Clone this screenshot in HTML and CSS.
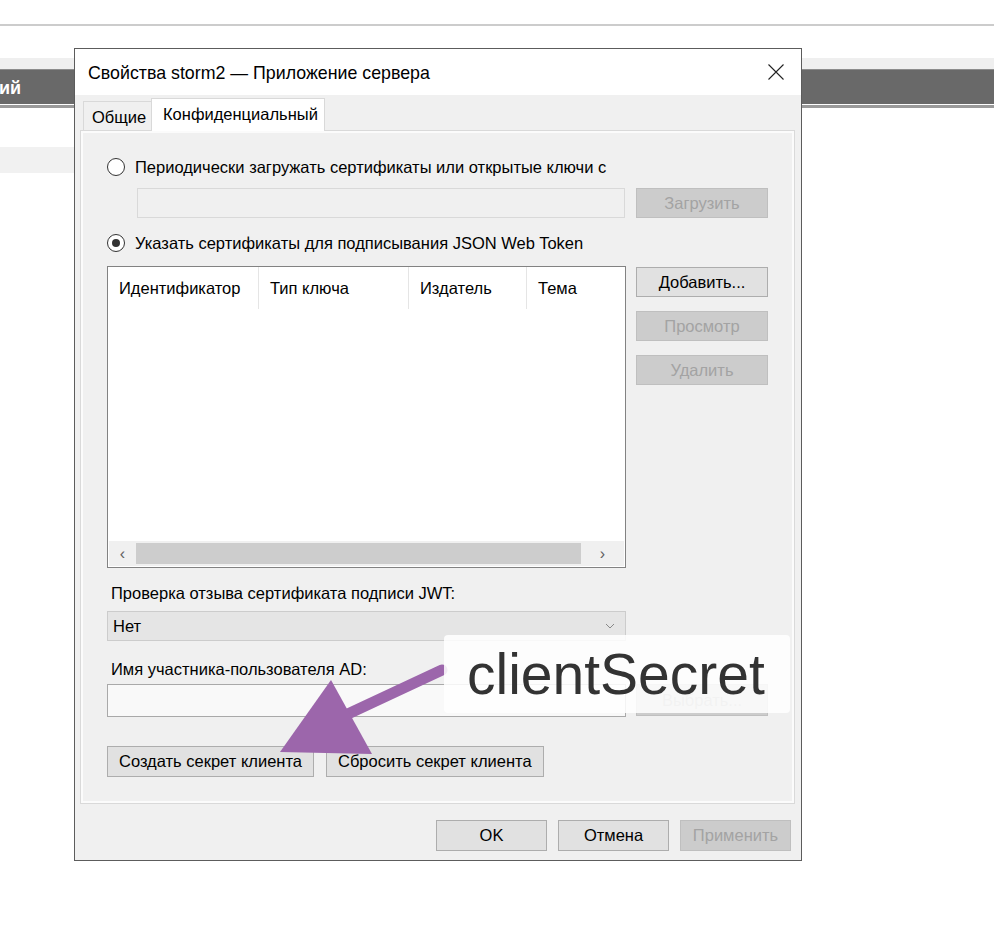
FILE: index.html
```html
<!DOCTYPE html>
<html lang="ru">
<head>
<meta charset="utf-8">
<title>Свойства storm2</title>
<link rel="stylesheet" href="styles.css">
</head>
<body>
<div class="page">
  <div class="topline"></div>
  <div class="strip"></div>
  <div class="bar"><span class="bar-text">ий</span></div>
  <div class="bar-under"></div>
  <div class="row-band"></div>
</div>

<div class="dialog">
  <div class="titlebar">
    <span class="title">Свойства storm2 — Приложение сервера</span>
    <svg class="close" width="16" height="16" viewBox="0 0 16 16"><path d="M0.5 0.5 L15.5 15.5 M15.5 0.5 L0.5 15.5" stroke="#222" stroke-width="1.1" fill="none"/></svg>
  </div>
  <div class="body">
    <div class="tabs">
      <div class="tab">Общие</div>
      <div class="tab active">Конфиденциальный</div>
    </div>
    <div class="panel">
      <div class="radio-row">
        <span class="radio"></span>
        <span>Периодически загружать сертификаты или открытые ключи с</span>
      </div>
      <div class="grid row-input1">
        <div class="field disabled indent"></div>
        <button class="btn disabled">Загрузить</button>
      </div>
      <div class="radio-row radio2">
        <span class="radio checked"></span>
        <span>Указать сертификаты для подписывания JSON Web Token</span>
      </div>
      <div class="grid row-list">
        <div class="listview">
          <div class="lv-head">
            <div class="col c1">Идентификатор</div>
            <div class="col c2">Тип ключа</div>
            <div class="col c3">Издатель</div>
            <div class="col c4">Тема</div>
          </div>
          <div class="lv-body"></div>
          <div class="hscroll">
            <span class="arr">‹</span>
            <span class="thumb"></span>
            <span class="arr">›</span>
          </div>
        </div>
        <div class="side-buttons">
          <button class="btn">Добавить...</button>
          <button class="btn disabled">Просмотр</button>
          <button class="btn disabled">Удалить</button>
        </div>
      </div>
      <div class="label lbl1">Проверка отзыва сертификата подписи JWT:</div>
      <div class="grid">
        <div class="combo"><span>Нет</span><svg width="10" height="6" viewBox="0 0 10 6"><path d="M1 1 L5 5 L9 1" stroke="#888" stroke-width="1" fill="none"/></svg></div>
      </div>
      <div class="label lbl2">Имя участника-пользователя AD:</div>
      <div class="grid row-ad">
        <div class="field ad"></div>
        <button class="btn disabled">Выбрать...</button>
      </div>
      <div class="secret-row">
        <button class="btn">Создать секрет клиента</button>
        <button class="btn">Сбросить секрет клиента</button>
      </div>
    </div>
    <div class="footer">
      <button class="btn wide">OK</button>
      <button class="btn wide">Отмена</button>
      <button class="btn wide disabled">Применить</button>
    </div>
  </div>
</div>

<svg class="arrow" width="994" height="930" viewBox="0 0 994 930">
  <line x1="442" y1="670" x2="335" y2="720" stroke="#9c66ab" stroke-width="11" stroke-linecap="round"/>
  <polygon points="331,680 280,752 372,754" fill="#9c66ab"/>
</svg>
<div class="callout">clientSecret</div>
</body>
</html>
```

FILE: styles.css
```css
* { box-sizing: border-box; }
html, body { margin: 0; padding: 0; background: #fff; }
body {
  width: 994px;
  height: 930px;
  position: relative;
  overflow: hidden;
  font-family: "Liberation Sans", Arial, sans-serif;
  font-size: 16.5px;
  color: #000;
}

/* background page */
.page { width: 994px; }
.topline { margin-top: 24px; height: 2px; background: #cccccc; }
.strip { margin-top: 32px; height: 11px; background: #efefef; }
.bar {
  height: 35px;
  background: #696969;
  border-top: 1px solid #8c8c8c;
  display: flex;
  align-items: center;
}
.bar-text { color: #fff; font-weight: bold; font-size: 18px; margin-left: -1px; padding-top: 2px; }
.bar-under { background: #fff; border-bottom: 3px solid #9a9a9a; height: 4px; }
.row-band { margin-top: 39px; height: 26px; width: 80px; background: #f1f1f1; }

/* dialog */
.dialog {
  position: absolute;
  left: 74px;
  top: 48px;
  width: 728px;
  height: 813px;
  border: 1px solid #5c5c5c;
  background: #fff;
  display: flex;
  flex-direction: column;
}
.titlebar {
  height: 46px;
  display: flex;
  align-items: center;
  justify-content: space-between;
  padding: 3px 17px 0 13px;
  background: #fff;
}
.title { font-size: 17.8px; color: #000; }
.close { display: block; margin-top: -4px; }

.body {
  flex: 1;
  background: #f0f0f0;
  padding: 3px 6px 0 5px;
  display: flex;
  flex-direction: column;
}
.tabs { display: flex; align-items: flex-end; padding-left: 3px; height: 32px; }
.tab {
  height: 29px;
  padding: 2px 0 0 8px;
  display: flex;
  align-items: center;
  border: 1px solid #d9d9d9;
  border-bottom: none;
  border-right: none;
  background: #f0f0f0;
  width: 68px;
  white-space: nowrap;
}
.tab.active {
  height: 33px;
  width: 174px;
  background: #fff;
  border-right: 1px solid #d9d9d9;
  padding: 0 0 2px 11px;
  margin-bottom: -1px;
  position: relative;
  z-index: 1;
}

.panel {
  height: 674px;
  border: 1px solid #d9d9d9;
  box-shadow: inset 0 0 0 2px #fbfbfb;
  background: #f0f0f0;
  padding: 26px 26px 0 26px;
}

.grid { display: grid; grid-template-columns: 519px 132px; column-gap: 10px; }

.radio-row { display: flex; align-items: center; gap: 10px; height: 20px; white-space: nowrap; }
.radio {
  flex: none;
  width: 18px; height: 18px;
  border: 1px solid #333;
  border-radius: 50%;
  background: #fff;
  display: flex; align-items: center; justify-content: center;
}
.radio.checked::after {
  content: "";
  width: 8px; height: 8px;
  border-radius: 50%;
  background: #333;
}
.row-input1 { margin-top: 11px; }
.radio2 { margin-top: 15px; }
.row-list { margin-top: 13px; }

.field { height: 30px; border: 1px solid #d9d9d9; background: #f0f0f0; }
.field.indent { margin-left: 30px; margin-right: 1px; }

.btn {
  font-family: inherit;
  font-size: 16.5px;
  height: 30px;
  border: 1px solid #adadad;
  background: #e1e1e1;
  color: #000;
  padding: 0;
  margin: 0;
  white-space: nowrap;
}
.btn.disabled { background: #cccccc; border-color: #bfbfbf; color: #a3a3a3; }

.listview {
  height: 302px;
  border: 1px solid #828282;
  background: #fff;
  display: flex;
  flex-direction: column;
}
.lv-head { display: flex; height: 43px; }
.col {
  display: flex; align-items: center;
  padding-left: 11px;
  border-right: 1px solid #e5e5e5;
  height: 42px;
  white-space: nowrap;
}
.c1 { width: 151px; }
.c2 { width: 150px; }
.c3 { width: 118px; }
.c4 { flex: 1; border-right: none; }
.lv-body { flex: 1; }
.hscroll {
  height: 25px;
  background: #f0f0f0;
  display: flex;
  align-items: center;
  margin: 0 1px 1px;
}
.arr { width: 27px; text-align: center; color: #606060; font-size: 16px; }
.arr:last-child { width: 43px; }
.thumb { flex: 1; height: 21px; background: #cdcdcd; }

.side-buttons { display: flex; flex-direction: column; gap: 14px; padding-top: 1px; }

.label { height: 18px; display: flex; align-items: center; padding-left: 4px; white-space: nowrap; }
.lbl1 { margin-top: 16px; }
.lbl2 { margin-top: 19px; }

.combo {
  margin-top: 9px;
  height: 30px;
  border: 1px solid #cccccc;
  background: #e5e5e5;
  display: flex;
  align-items: center;
  justify-content: space-between;
  padding: 0 10px 0 5px;
}
.row-ad { margin-top: 6px; }
.field.ad { height: 33px; border: 1px solid #a9a9a9; background: #f9f9f9; }
.row-ad .btn { height: 32px; }

.secret-row { display: flex; gap: 12px; margin-top: 29px; }
.secret-row .btn { height: 31px; padding: 0 11px; }

.footer { display: flex; justify-content: flex-end; gap: 11px; margin-top: 16px; padding-right: 4px; }
.btn.wide { width: 111px; height: 31px; }

/* annotation */
.arrow { position: absolute; left: 0; top: 0; pointer-events: none; }
.callout {
  position: absolute;
  left: 444px;
  top: 635px;
  width: 346px;
  height: 78px;
  background: rgba(255, 255, 255, 0.86);
  border-radius: 4px;
  font-family: "Liberation Sans", Arial, sans-serif;
  font-size: 57px;
  line-height: 78px;
  color: #333;
  padding-left: 23px;
}
```
